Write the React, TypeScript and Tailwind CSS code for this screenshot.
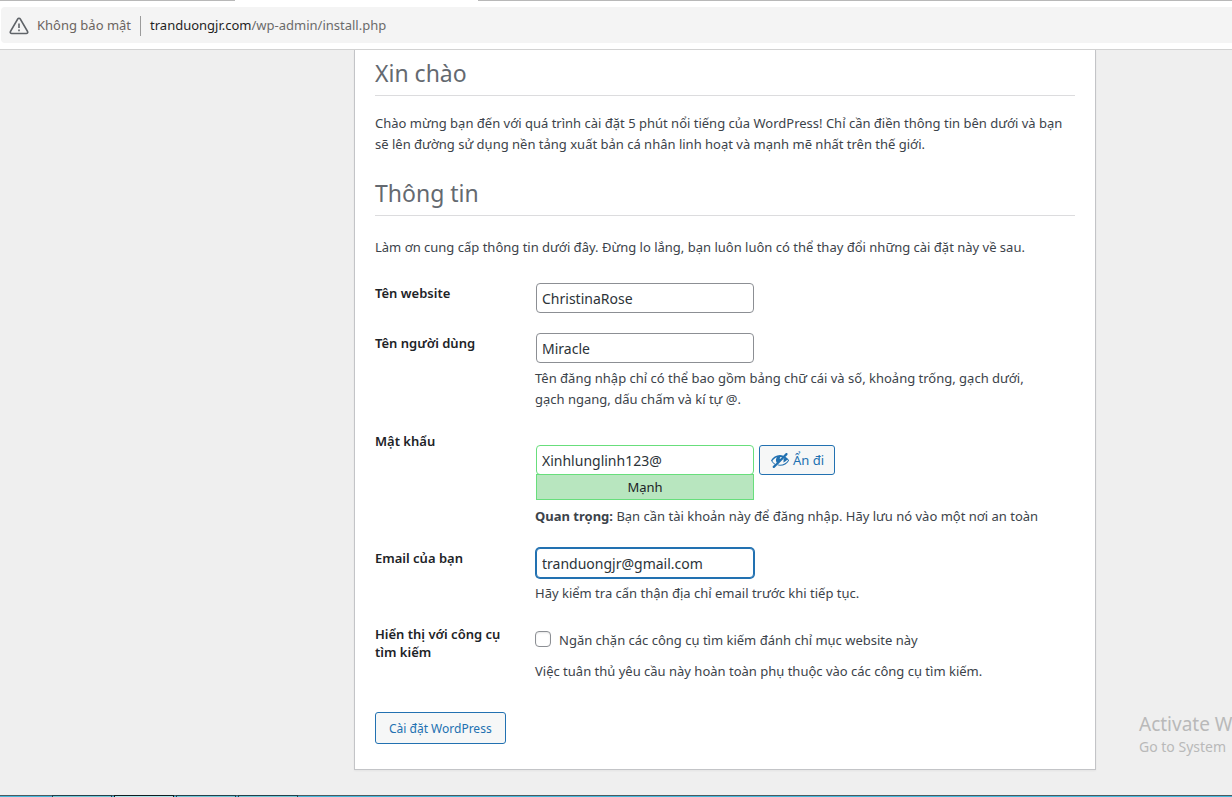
import type { ReactNode } from 'react';

const inputBase =
  'block h-[30px] w-[218px] rounded border bg-white px-[5px] text-[14px] text-[#2c3338] outline-none';

function AddressBar() {
  return (
    <header className="flex flex-col border-b border-[#d2d2d2] bg-white">
      <div className="flex h-px">
        <div className="w-[235px] bg-[#b8b8b8]" />
        <div className="w-[243px]" />
        <div className="grow bg-[#b8b8b8]" />
      </div>
      <div className="my-1.5 ml-px flex h-9 items-center rounded-l bg-[#f4f4f4] pt-px pl-2 text-[13px]">
        <svg viewBox="0 0 20 18" className="h-[18px] w-5" fill="none" stroke="#5f6368" strokeWidth="1.7" strokeLinejoin="round" aria-hidden="true">
          <path d="M8.8 1.9 1.5 14.4c-.6 1 .1 2.1 1.2 2.1h14.6c1.100 0 1.800-1.100 1.200-2.100L11.200 1.900c-.5-.9-1.900-.9-2.400 0Z" />
          <path d="M10 6.500v4.500M10 12.500v1.700" strokeWidth="1.600" />
        </svg>
        <span className="ml-2 text-[#6b6460]">Không bảo mật</span>
        <span className="mx-[9px] h-5 w-px bg-[#9b9b9b]" />
        <span className="text-[#6b6b6b]">
          <span className="text-[#1f1f1f]">tranduongjr.com</span>/wp-admin/install.php
        </span>
      </div>
    </header>
  );
}

function Heading({ children }: { children: ReactNode }) {
  return (
    <h1 className="border-b border-[#dcdcde] pb-[7px] text-[23px] leading-[29px] text-[#646970]">{children}</h1>
  );
}

function Row({ label, htmlFor, children }: { label: string; htmlFor: string; children: ReactNode }) {
  return (
    <div className="flex py-2.5">
      <div className="w-40 shrink-0 pt-px pr-5">
        <label htmlFor={htmlFor} className="block text-[13px] leading-[18px] font-semibold text-[#1d2327]">
          {label}
        </label>
      </div>
      <div className="min-w-0 grow">{children}</div>
    </div>
  );
}

function HiddenIcon() {
  return (
    <svg viewBox="0 0 20 20" className="size-5" fill="currentColor" aria-hidden="true">
      <path d="M17.300 3.300c-.4-.4-1.100-.4-1.600 0l-2.400 2.400c-1.100-.4-2.200-.6-3.300-.6-3.800.1-7.200 2.100-9 5.400.2.400.5.800.8 1.200.8 1.100 1.800 2 2.900 2.700L3 16.100c-.4.4-.5 1.100 0 1.600.4.4 1.100.5 1.600 0L17.300 4.900c.4-.5.4-1.200 0-1.600zm-10.600 9.400-1.300 1.300c-1.200-.7-2.300-1.700-3.100-2.900C3.500 9 5.100 7.800 7 7.200c-1.300 1.400-1.400 3.600-.3 5.500zM10.100 9c-.5-.5-.4-1.300.2-1.800.5-.4 1.200-.4 1.600 0L10.100 9zm4.200-.5-.9.900c.4 1.100.2 2.200-.4 3.200 1.900-.6 3.500-1.800 4.700-3.500-.8-1.200-1.900-2.200-3.100-2.900l-.9.900c.3.400.5.900.6 1.400zm.9-1.800-.8.800c1.500.8 2.700 1.900 3.700 3-1.800 2.600-4.800 4.200-8 4.200-.6 0-1.200-.1-1.800-.2l-.8.800c.8.300 1.700.4 2.600.4 3.900 0 7.100-2 9-5.300-1-1.700-2.300-2.900-3.900-3.700z" />
    </svg>
  );
}

export default function App() {
  return (
    <div className="flex min-h-screen flex-col bg-[#efefef] font-['Noto_Sans','Open_Sans',sans-serif]">
      <AddressBar />
      <div className="relative grow overflow-hidden pb-[25px]">
        <main className="ml-[354px] max-w-[742px] border-x border-b border-[#c3c4c7] bg-white px-5 pt-[9px] pb-[25px] text-[13px] leading-[21px] text-[#3c434a] shadow-xs">
          <Heading>Xin chào</Heading>
          <p className="mt-[17px] mb-6">
            Chào mừng bạn đến với quá trình cài đặt 5 phút nổi tiếng của WordPress! Chỉ cần điền thông tin bên dưới và
            bạn sẽ lên đường sử dụng nền tảng xuất bản cá nhân linh hoạt và mạnh mẽ nhất trên thế giới.
          </p>
          <Heading>Thông tin</Heading>
          <p className="mt-[21px] mb-[15px]">
            Làm ơn cung cấp thông tin dưới đây. Đừng lo lắng, bạn luôn luôn có thể thay đổi những cài đặt này về sau.
          </p>
          <form onSubmit={(e) => e.preventDefault()}>
            <Row label="Tên website" htmlFor="site">
              <input id="site" type="text" defaultValue="ChristinaRose" className={`${inputBase} ml-px border-[#8c8f94]`} />
            </Row>
            <Row label="Tên người dùng" htmlFor="user">
              <input id="user" type="text" defaultValue="Miracle" className={`${inputBase} ml-px border-[#8c8f94]`} />
              <p className="mt-[5px] mb-px max-w-[520px]">
                Tên đăng nhập chỉ có thể bao gồm bảng chữ cái và số, khoảng trống, gạch dưới, gạch ngang, dấu chấm và kí
                tự @.
              </p>
            </Row>
            <Row label="Mật khẩu" htmlFor="pass">
              <div className="flex items-start gap-[5px] pt-3.5">
                <div className="ml-px">
                  <input id="pass" type="text" defaultValue="Xinhlunglinh123@" className={`${inputBase} border-[#68de7c]`} />
                  <div className="-mt-px flex h-[26px] w-[218px] items-center justify-center border border-[#68de7c] bg-[#b8e6bf] text-[#1d2327]">
                    Mạnh
                  </div>
                </div>
                <button type="button" className="flex h-[30px] items-center gap-[3px] rounded-[3px] border border-[#2271b1] bg-[#f6f7f7] px-2.5 text-[#2271b1]">
                  <HiddenIcon />
                  Ẩn đi
                </button>
              </div>
              <p className="mt-1.5 mb-px">
                <strong className="font-bold">Quan trọng:</strong> Bạn cần tài khoản này để đăng nhập. Hãy lưu nó vào một
                nơi an toàn
              </p>
            </Row>
            <Row label="Email của bạn" htmlFor="email">
              <input id="email" type="email" defaultValue="tranduongjr@gmail.com" className={`${inputBase} ml-px border-[#2271b1] ring-1 ring-[#2271b1]`} />
              <p className="mt-[5px]">Hãy kiểm tra cẩn thận địa chỉ email trước khi tiếp tục.</p>
            </Row>
            <Row label="Hiển thị với công cụ tìm kiếm" htmlFor="noindex">
              <div className="flex items-start gap-2 pt-1.5">
                <input id="noindex" type="checkbox" className="mt-px size-4 appearance-none rounded border border-[#8c8f94] bg-white shadow-[inset_0_1px_2px_rgba(0,0,0,0.1)]" />
                <label htmlFor="noindex">Ngăn chặn các công cụ tìm kiếm đánh chỉ mục website này</label>
              </div>
              <p className="mt-2.5">Việc tuân thủ yêu cầu này hoàn toàn phụ thuộc vào các công cụ tìm kiếm.</p>
            </Row>
            <button type="submit" className="mt-5 block h-8 rounded-[3px] border border-[#2271b1] bg-[#f6f7f7] px-[13px] text-[12px] text-[#2271b1]">
              Cài đặt WordPress
            </button>
          </form>
        </main>
        <div className="absolute bottom-[37px] left-[1139px] whitespace-nowrap text-[#b9b9b9]">
          <div className="text-[19px] leading-6">Activate W</div>
          <div className="text-[14px] leading-[22px]">Go to System</div>
        </div>
      </div>
      <footer className="flex h-0.5 gap-0.5 bg-[#45b8dc] pl-[52px] shadow-[inset_0_1px_0_#4b5a60]">
        <div className="w-[60px] border-x border-t border-[#24404a] bg-[#6fc8d8]" />
        <div className="w-[60px] border-x border-t border-[#101c20] bg-[#a8e4ea]" />
        <div className="w-[60px] border-x border-t border-[#24404a] bg-[#6fc8d8]" />
        <div className="w-[60px] border-x border-t border-[#24404a] bg-[#6fc8d8]" />
      </footer>
    </div>
  );
}
